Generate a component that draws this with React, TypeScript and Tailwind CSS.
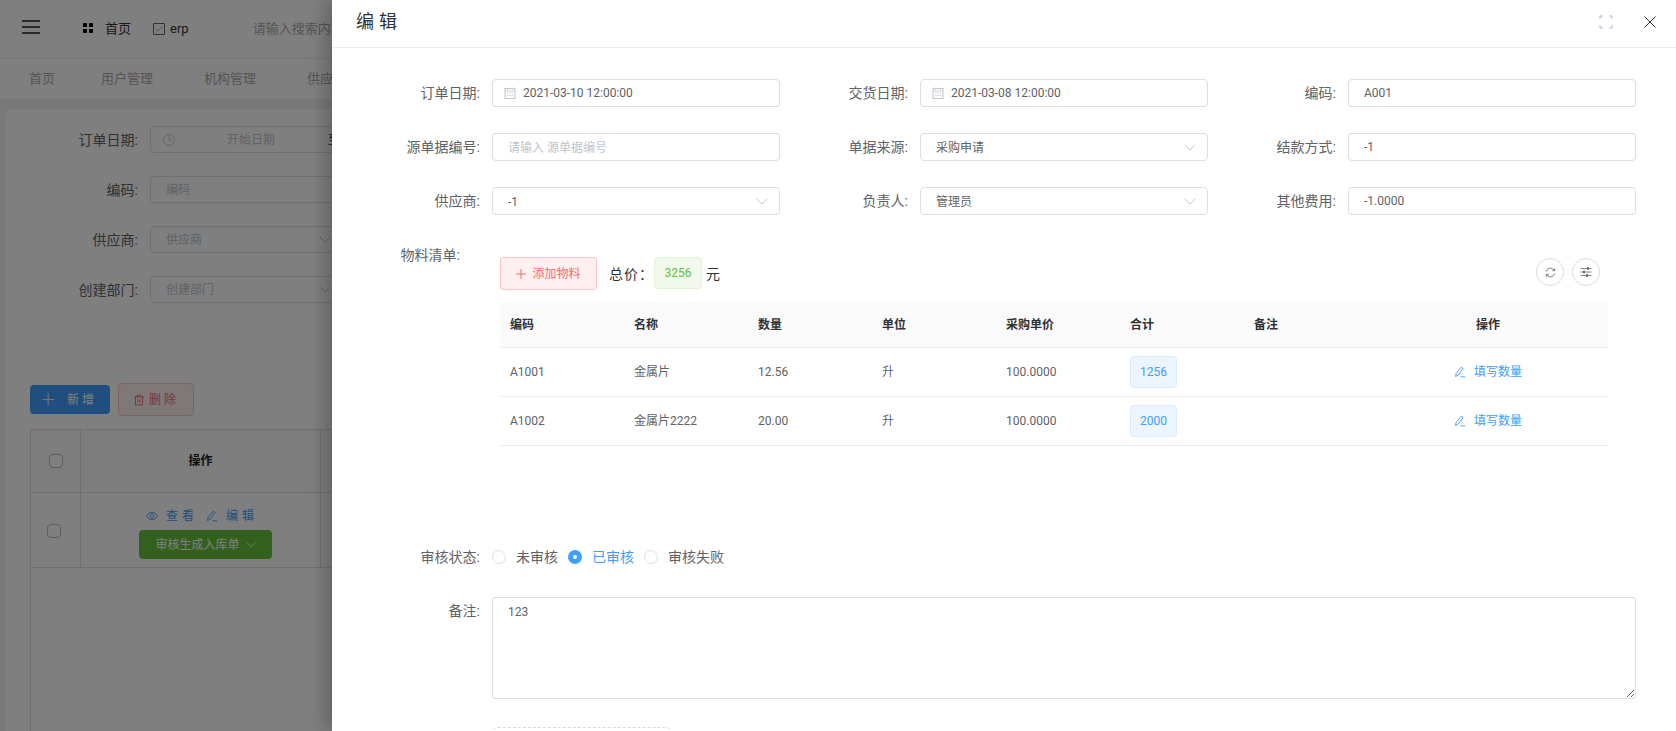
import { Check } from "lucide-react";

const FONT = "font-['Roboto','Noto_Sans_CJK_SC',sans-serif]";

const Chevron = ({ className = "" }: { className?: string }) => (
  <svg viewBox="0 0 14 8" className={`w-3 h-[7px] ${className}`} fill="none" stroke="currentColor" strokeWidth="1.1">
    <path d="M1 1l6 6 6-6" />
  </svg>
);

const CalendarIcon = () => (
  <svg viewBox="0 0 12 12" className="w-3 h-3 text-[#c0c4cc]" fill="none" stroke="currentColor" strokeWidth="1">
    <rect x="1" y="1.5" width="10" height="10" />
    <path d="M1 4h10M3.500 0.500v2M8.500 0.500v2M3 6h1.500M5.300 6h1.500M7.600 6h1.500M3 8.500h1.500M5.300 8.500h1.500M7.600 8.500h1.500" strokeWidth="0.8" />
  </svg>
);

const EditIcon = ({ className = "" }: { className?: string }) => (
  <svg viewBox="0 0 12 12" className={`w-3 h-3 ${className}`} fill="none" stroke="currentColor" strokeWidth="0.9">
    <path d="M1.500 10.500l.6-3L7.200 1.200l2 1.300L4 9.300z" />
    <path d="M6.500 10.800h4.500" />
  </svg>
);

const Field = ({ label, children }: { label: string; children: React.ReactNode }) => (
  <div className="flex items-center gap-3">
    <div className="w-[128px] text-right text-sm leading-7 text-[#606266]">{label}:</div>
    {children}
  </div>
);

const Box = ({ children }: { children: React.ReactNode }) => (
  <div className="w-[288px] h-7 flex items-center justify-between border border-[#dcdfe6] rounded bg-white px-[15px] text-xs text-[#606266]">
    {children}
  </div>
);

const DateBox = ({ value }: { value: string }) => (
  <div className="w-[288px] h-7 flex items-center gap-[7px] border border-[#dcdfe6] rounded bg-white pl-[11px] text-xs text-[#606266]">
    <CalendarIcon />
    {value}
  </div>
);

const SelectBox = ({ value }: { value: string }) => (
  <Box>
    <span className="mt-[2px]">{value}</span>
    <Chevron className="text-[#c0c4cc] -mr-[4px]" />
  </Box>
);

const Radio = ({ label, checked }: { label: string; checked?: boolean }) => (
  <div className={`flex items-center gap-[10px] text-sm ${checked ? "text-[#409eff]" : "text-[#606266]"}`}>
    {checked ? (
      <span className="w-[14px] h-[14px] rounded-full bg-[#409eff] flex items-center justify-center">
        <span className="w-1 h-1 rounded-full bg-white" />
      </span>
    ) : (
      <span className="w-[14px] h-[14px] rounded-full border border-[#dcdfe6] bg-white" />
    )}
    {label}
  </div>
);

const rows = [
  { code: "A1001", name: "金属片", qty: "12.56", unit: "升", price: "100.0000", total: "1256" },
  { code: "A1002", name: "金属片2222", qty: "20.00", unit: "升", price: "100.0000", total: "2000" },
];

const heads = ["编码", "名称", "数量", "单位", "采购单价", "合计", "备注"];
const cols = "grid grid-cols-[124px_124px_124px_124px_124px_124px_124px_240px] items-center";

function Background() {
  return (
    <div className="h-full bg-[#f0f2f5] flex flex-col">
      <div className="h-[59px] bg-white flex items-center border-b border-[#ebeef5] shrink-0">
        <div className="ml-[22px] w-[18px] flex flex-col gap-[4px] -mt-[4px]">
          <span className="h-[2px] bg-[#555]" />
          <span className="h-[2px] bg-[#555]" />
          <span className="h-[2px] bg-[#555]" />
        </div>
        <div className="ml-[43px] grid grid-cols-2 gap-[2px] w-[10px] -mt-[2px]">
          <span className="w-1 h-1 bg-black" />
          <span className="w-1 h-1 bg-black" />
          <span className="w-1 h-1 bg-black" />
          <span className="w-1 h-1 bg-black" />
        </div>
        <span className="ml-3 text-[13px] text-[#303133]">首页</span>
        <span className="ml-[22px] w-3 h-3 border border-[#606266] rounded-[1px] flex items-center justify-center">
          <Check size={10} strokeWidth={1.5} className="text-[#606266]" />
        </span>
        <span className="ml-[5px] text-[13px] text-[#303133]">erp</span>
        <span className="ml-[64px] text-[13px] text-[#aaa] whitespace-nowrap">请输入搜索内容</span>
      </div>
      <div className="h-10 bg-white flex items-center text-[13px] text-[#aaa] shrink-0">
        <span className="ml-[29px]">首页</span>
        <span className="ml-[46px]">用户管理</span>
        <span className="ml-[51px]">机构管理</span>
        <span className="ml-[51px] whitespace-nowrap">供应商管理</span>
      </div>
      <div className="mt-[10px] ml-[6px] bg-white rounded-t-md flex-1 overflow-hidden">
        <div className="pt-[17px] flex flex-col gap-[23px]">
          {[
            ["订单日期", "开始日期"],
            ["编码", "编码"],
            ["供应商", "供应商"],
            ["创建部门", "创建部门"],
          ].map(([label, ph], i) => (
            <div key={label} className="flex items-center">
              <div className="w-[132px] text-right text-sm text-[#606266]">{label}:</div>
              <div className="ml-3 w-[400px] h-[27px] border border-[#dcdfe6] rounded flex items-center text-xs text-[#c0c4cc]">
                {i === 0 ? (
                  <>
                    <svg viewBox="0 0 12 12" className="ml-3 w-3 h-3" fill="none" stroke="currentColor" strokeWidth="0.9">
                      <circle cx="6" cy="6" r="5.400" />
                      <path d="M6 2.800V6.200H9" />
                    </svg>
                    <span className="ml-[52px]">开始日期</span>
                    <span className="ml-[53px] text-[#303133]">至</span>
                  </>
                ) : (
                  <span className="ml-[15px] w-[153px]">{ph}</span>
                )}
                {i >= 2 && <Chevron className="text-[#c0c4cc]" />}
              </div>
            </div>
          ))}
        </div>
        <div className="mt-[80px] ml-6 flex items-center gap-2">
          <div className="w-[80px] h-[29px] rounded bg-[#409eff] text-white text-xs tracking-[3px] flex items-center justify-center pr-[3px]">
            <span className="mr-2 text-base font-light leading-none">＋</span>新增
          </div>
          <div className="w-[76px] h-[33px] rounded border border-[#fbc4c4] bg-[#fef0f0] text-[#f56c6c] text-xs tracking-[3px] flex items-center justify-center">
            <svg viewBox="0 0 12 12" className="w-3 h-3 mr-1" fill="none" stroke="currentColor">
              <path d="M1 3h10M4 3V1.200h4V3M2.500 3v8h7V3M5 5.500v3M7 5.500v3" />
            </svg>
            删除
          </div>
        </div>
        <div className="mt-[13px] ml-6 border-l border-[#dcdfe6] h-[400px] w-[400px]">
          <div className="flex h-[64px] border-y border-[#dcdfe6] bg-[#fafafa]">
            <div className="w-[50px] border-r border-[#dcdfe6] flex items-center justify-center">
              <span className="w-[14px] h-[14px] border border-[#bbb] rounded-sm bg-white" />
            </div>
            <div className="w-[240px] border-r border-[#dcdfe6] flex items-center justify-center text-xs font-bold text-[#222]">操作</div>
          </div>
          <div className="flex h-[75px] border-b border-[#dcdfe6]">
            <div className="w-[50px] border-r border-[#dcdfe6] flex items-center justify-center">
              <span className="w-[14px] h-[14px] -ml-1 mt-[2px] border border-[#bbb] rounded-sm bg-white" />
            </div>
            <div className="w-[240px] border-r border-[#dcdfe6] flex flex-col items-center pt-4 text-xs">
              <div className="flex items-center text-[#409eff] tracking-[4px] leading-[14px] ml-[3px]">
                <svg viewBox="0 0 12 12" className="w-3 h-3 mr-2" fill="none" stroke="currentColor" strokeWidth="0.9">
                  <path d="M0.500 6c2-3 3.500-3.500 5.500-3.500S9.500 3 11.500 6c-2 3-3.500 3.500-5.500 3.500S2.500 9 0.500 6z" />
                  <circle cx="6" cy="6" r="2" />
                </svg>
                查看
                <EditIcon className="ml-2 mr-2" />
                编辑
              </div>
              <div className="mt-[7px] w-[133px] h-[29px] rounded bg-[#67c23a] text-[#fff] flex items-center justify-center gap-[6px] ml-[10px] whitespace-nowrap">
                审核生成入库单
                <Chevron className="w-[10px] h-[6px]" />
              </div>
            </div>
          </div>
        </div>
      </div>
    </div>
  );
}

export default function App() {
  return (
    <div className={`relative h-screen overflow-hidden ${FONT}`}>
      <Background />
      <div className="absolute inset-0 bg-black/50" />
      <div className="absolute top-0 right-0 bottom-0 left-[332px] bg-white flex flex-col shadow-[-8px_0_16px_rgba(0,0,0,0.2)]">
        <div className="h-[48px] shrink-0 border-b border-[#ebeef5] flex items-center pl-6 pr-[19px]">
          <span className="text-lg text-[#303133] tracking-[5px] mt-[-4px]">编辑</span>
          <svg viewBox="0 0 14 14" className="ml-auto w-[14px] h-[14px] text-[#a8b8cc] -mt-[4px]" fill="none" stroke="currentColor" strokeWidth="1">
            <path d="M1 4V1h3M10 1h3v3M13 10v3h-3M4 13H1v-3" />
          </svg>
          <svg viewBox="0 0 14 14" className="ml-[30px] w-[14px] h-[14px] text-[#303133] -mt-[4px]" fill="none" stroke="currentColor" strokeWidth="1">
            <path d="M1.500 1.500l11 11M12.500 1.500l-11 11" />
          </svg>
        </div>

        <div className="flex-1 overflow-hidden pt-[31px] pl-5 pr-10">
          <div className="grid grid-cols-3 gap-y-[26px]">
            <Field label="订单日期"><DateBox value="2021-03-10 12:00:00" /></Field>
            <Field label="交货日期"><DateBox value="2021-03-08 12:00:00" /></Field>
            <Field label="编码"><Box>A001</Box></Field>
            <Field label="源单据编号">
              <Box><span className="mt-[2px] text-[#c0c4cc]">请输入 源单据编号</span></Box>
            </Field>
            <Field label="单据来源"><SelectBox value="采购申请" /></Field>
            <Field label="结款方式"><Box>-1</Box></Field>
            <Field label="供应商"><SelectBox value="-1" /></Field>
            <Field label="负责人"><SelectBox value="管理员" /></Field>
            <Field label="其他费用"><Box>-1.0000</Box></Field>
          </div>

          {/* 物料清单 */}
          <div className="mt-[26px] flex h-[302px]">
            <div className="w-[108px] text-right text-sm leading-7 text-[#606266]">物料清单:</div>
            <div className="ml-[40px] pt-4 w-[1108px]">
              <div className="flex items-center h-[33px]">
                <div className="w-[97px] h-[33px] rounded-[3px] border border-[#fbc4c4] bg-[#fef0f0] text-[#f56c6c] text-xs flex items-center justify-center gap-[6px]">
                  <svg viewBox="0 0 10 10" className="w-[10px] h-[10px]" fill="none" stroke="currentColor" strokeWidth="1">
                    <path d="M5 0v10M0 5h10" />
                  </svg>
                  添加物料
                </div>
                <span className="ml-3 text-sm text-[#303133] tracking-[1px]">总价：</span>
                <span className="self-start w-[48px] h-8 border border-[#e1f3d8] bg-[#f0f9eb] rounded text-[#67c23a] text-xs flex items-center justify-center">3256</span>
                <span className="ml-1 text-sm text-[#303133]">元</span>
                <div className="ml-auto mr-[8px] self-start mt-px flex gap-2">
                  <span className="w-7 h-7 rounded-full border border-[#dcdfe6] flex items-center justify-center text-[#606266]">
                    <svg viewBox="0 0 12 12" className="w-[11px] h-[11px]" fill="none" stroke="currentColor" strokeWidth="0.9">
                      <path d="M1.500 5A4.500 4.500 0 0 1 9.500 3l1 1M10.500 7A4.500 4.500 0 0 1 2.500 9l-1-1M10.500 1.500V4H8M1.500 10.500V8H4" />
                    </svg>
                  </span>
                  <span className="w-7 h-7 rounded-full border border-[#dcdfe6] flex items-center justify-center text-[#606266]">
                    <svg viewBox="0 0 12 12" className="w-3 h-3" fill="none" stroke="currentColor" strokeWidth="0.8">
                      <path d="M0.500 2.500h11M0.500 6h11M0.500 9.500h11" />
                      <path d="M8 1v3M4 4.500v3M7 8v3" strokeWidth="1.600" />
                    </svg>
                  </span>
                </div>
              </div>
              <div className={`${cols} mt-[13px] h-[45px] bg-[#fafafa] border-b border-[#ebeef5] text-xs font-bold text-[#303133]`}>
                {heads.map((h) => (
                  <div key={h} className="pl-[10px]">{h}</div>
                ))}
                <div className="text-center">操作</div>
              </div>
              {rows.map((r) => (
                <div key={r.code} className={`${cols} h-[49px] border-b border-[#ebeef5] text-xs text-[#606266]`}>
                  <div className="pl-[10px]">{r.code}</div>
                  <div className="pl-[10px]">{r.name}</div>
                  <div className="pl-[10px]">{r.qty}</div>
                  <div className="pl-[10px]">{r.unit}</div>
                  <div className="pl-[10px]">{r.price}</div>
                  <div className="pl-[10px]">
                    <span className="w-[47px] h-8 border border-[#d9ecff] bg-[#ecf5ff] rounded text-[#409eff] flex items-center justify-center">{r.total}</span>
                  </div>
                  <div />
                  <div className="flex items-center justify-center gap-2 text-[#409eff]">
                    <EditIcon />
                    填写数量
                  </div>
                </div>
              ))}
            </div>
          </div>

          <div className="flex items-center h-7 gap-3">
            <div className="w-[128px] text-right text-sm text-[#606266]">审核状态:</div>
            <div className="flex items-center gap-[10px]">
              <Radio label="未审核" />
              <Radio label="已审核" checked />
              <Radio label="审核失败" />
            </div>
          </div>

          <div className="mt-[26px] flex gap-3">
            <div className="w-[128px] text-right text-sm leading-7 text-[#606266]">备注:</div>
            <textarea
              readOnly
              defaultValue="123"
              className="flex-1 h-[102px] border border-[#dcdfe6] rounded px-[15px] py-[5px] text-xs leading-[18px] text-[#606266] outline-none"
            />
          </div>

          <div className="mt-7 ml-[140px] w-[180px] h-[180px] border border-dashed border-[#d9d9d9] rounded-md" />
        </div>
      </div>
    </div>
  );
}
